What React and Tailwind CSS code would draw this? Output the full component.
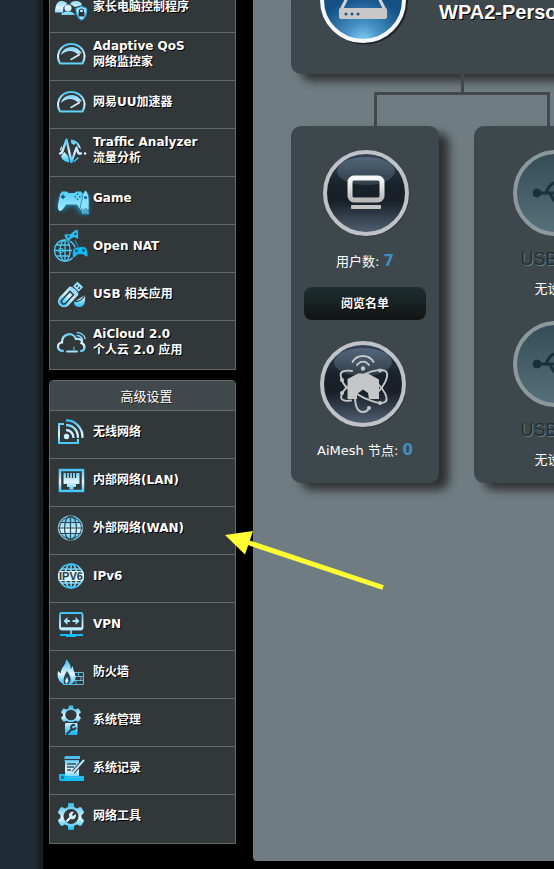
import React from "react";

const G = "url(#ice)";

function Gauge() {
  return (
    <g fill="none" stroke={G} strokeLinecap="round">
      <path strokeWidth="2" strokeLinejoin="round" d="M10 30.500 C6.500 25 8 19 11 15.500 C15 11 18 11 21 11 C26 11 29 12.500 32 16 C35 20 35.500 25 32.500 30.500 Z" />
      <path stroke="none" fill={G} d="M11 22 C13 14.500 21 12 28 16 L32 20 L27.500 21 C23 17 16 17 11 22 Z" />
      <path strokeWidth="1.600" d="M21 26.500 L29.500 21.500" />
    </g>
  );
}

function Parental() {
  return (
    <g fill={G}>
      <circle cx="11" cy="11" r="4" />
      <circle cx="26" cy="11" r="4" />
      <path d="M5 27.500 C5 21 7 16 11 16 C15 16 17 18 17 19 L13.500 22 L13 27.500 Z" />
      <path d="M20 19 C21 17 23 16 26 16 C29 16 31 17 32 20 L25 22 Z" />
      <circle cx="18" cy="23" r="3.600" />
      <path d="M11 30 C12 27 15 26.500 18 26.500 C22 26.500 24 28 25 30 Z" />
      <path fill="#b4e6fb" stroke="#2bb5ed" strokeWidth="1.200" d="M26 23.500 L31.500 21.500 L36.500 23.500 C37 29 35 33 31.500 35 C28 33 26 29 26 23.500 Z" />
      <rect x="28.500" y="27" width="6" height="4.500" fill="#24343c" />
      <path d="M29.500 27 V25.500 C29.500 23.500 33.500 23.500 33.500 25.500 V27" fill="none" stroke="#24343c" strokeWidth="1.200" />
    </g>
  );
}

function Traffic() {
  return (
    <g fill="none" stroke={G} strokeLinejoin="round" strokeLinecap="round">
      <path stroke="none" fill={G} d="M21 10.500 C26 11 30 14 31 20 L28.500 18.500 L26 14 L24 16 L21 14 Z" />
      <path stroke="none" fill={G} d="M11 27 L14.500 23 L18 27 L19.500 33.500 C15 33 12 31 11 27 Z" />
      <path strokeWidth="1.200" d="M11.500 18 L10.500 21 M24 32.500 L28 29" />
      <path strokeWidth="2.300" d="M10 24.500 L12 23.500 L16.500 10.500 L21.500 33 L26.500 18.500 L28.500 24.500 L31 24.500" />
      <circle cx="35" cy="24.500" r="1.200" fill="#e8f9ff" stroke="none" />
    </g>
  );
}

function Game() {
  return (
    <g>
      <path filter="url(#glow)" fill="#0fb1ee" opacity=".65" d="M9 20 L8 33 L13 34 L17 29 H26 L30 37 H38 V18 Z" />
      <path fill="url(#sky)" d="M12 14.500 H17 L18.500 16 H24.500 L26 14.500 H31 L33 17 L35 25 C36 30 36 33 33 34 C31 34 28 29 27 27.500 H16 C14.500 30 12 34 10 34 C7.500 33 7.500 29 8.500 25 L10 17 Z" />
      <path fill="#8fe0fb" stroke="#1c7fa7" strokeWidth=".8" d="M32 23 C32 19 33.500 15 35.500 13.500 C37.500 15 39 19 39 23 V37 H32 V32 L30 30 Z" />
      <circle cx="35.500" cy="20.500" r="1.600" fill="#166b91" />
      <path d="M34 37 V32 M36 37 V31 M38 36 V32" stroke="#166b91" strokeWidth="1" />
      <path d="M13 17.500 V22 M10.800 19.700 H15.200" stroke="#114e6b" strokeWidth="1.400" />
      <path d="M27.500 16.500 V18 M27.500 21.500 V23 M24.500 19.700 H26 M29 19.700 H30.500" stroke="#146a90" strokeWidth="1.500" />
    </g>
  );
}

function OpenNat() {
  return (
    <g fill="none" stroke="#4bcaf4" strokeWidth="1.300">
      <circle cx="15" cy="25.500" r="10.500" />
      <ellipse cx="15" cy="25.500" rx="5" ry="10.500" />
      <path d="M15 15 V36 M4.500 25.500 H22 M6.500 20 H20 M6.500 31 H20" />
      <circle cx="11" cy="25.500" r="2.300" strokeWidth="1" />
      <path fill="#2fbdf0" stroke="#323739" strokeWidth=".8" d="M14 10 C16 8 18 9 20 9 L25 5 C28 3 28.500 6 28.500 9 C29 13 28 15 26.500 13.500 L24 12.500 L21 14 L19 17 C17 17 15 13 14 10 Z" />
      <circle cx="18.500" cy="11.500" r="1.300" fill="#165774" stroke="none" />
      <circle cx="25.500" cy="9" r="1.300" fill="#165774" stroke="none" />
      <path d="M25 15.500 L28 21.500" stroke="#198fbd" />
      <path fill="#12b9f3" stroke="#323739" strokeWidth=".8" d="M23 24 L27 22 L33 21.500 C37 22 38 26 38 31 C37 33 35 31 33 29.500 H28 L24 33 C22 34 22 28 23 24 Z" />
      <circle cx="26.500" cy="26" r="1.400" fill="#165774" stroke="none" />
      <circle cx="33.500" cy="25.500" r="1.400" fill="#165774" stroke="none" />
    </g>
  );
}

function Usb() {
  return (
    <g>
      <g transform="rotate(43 19 23)">
        <path fill={G} stroke="#c3ecfc" strokeWidth="1" d="M13.500 16 C13.500 14 24.500 14 24.500 16 V30 C24.500 37.500 13.500 37.500 13.500 30 Z" />
        <path fill="none" stroke="#29404b" strokeWidth="1.500" d="M16.500 19 H21.500 V30 C21.500 34 16.500 34 16.500 30 Z" />
        <path fill="#b9eafd" stroke="#4abce8" strokeWidth=".8" d="M15.500 7 H23 V13 H15.500 Z" />
        <path stroke="#20475a" strokeWidth="1.600" d="M18 9 V11.500 M21 9 V11.500" />
      </g>
      <path fill={G} d="M24 29 L35 22 C35.500 27 35 34 29.500 34 C26 34 24 32 24 29 Z" />
      <path fill="none" stroke="#31424a" strokeWidth="1.300" d="M25 28.500 C29 29 33 26 35 22" />
    </g>
  );
}

function Cloud() {
  return (
    <g fill="none" stroke={G} strokeWidth="2.200" strokeLinecap="round">
      <path d="M13 30 C6.500 30 6.500 22 12 21.500 C12 12.500 23 10 26 18 C31 17 33 20 31.500 22 C36 24 35 30 31 30" />
      <path strokeWidth="2" d="M17 30.500 H27" stroke="#9fe2fb" />
      <path strokeWidth="1" d="M24 26 V29" stroke="#5bcdf5" />
      <path strokeWidth="1.300" d="M27 11.500 C31 11.500 34.500 14 35 17.500 M27 14.500 C30 14.500 31.500 16 32.500 18.500" />
    </g>
  );
}

function Wireless() {
  return (
    <g fill="none" stroke={G} strokeWidth="2">
      <path d="M14 13 H9 V32 H28 V28" />
      <path strokeWidth="2.300" d="M16 9.500 C25 9 33 17 32.500 27 M16 14 C23 14 28 19 28 27 M16 19 C20 19 23.500 22 23.500 27" />
      <circle cx="16.500" cy="25.500" r="2.700" fill="#c9effd" stroke="none" />
    </g>
  );
}

function Lan() {
  return (
    <g>
      <rect x="10" y="11" width="23" height="21" fill="none" stroke={G} strokeWidth="2.500" />
      <path fill={G} d="M13.500 14 H29.500 V25 H26 V28 H23.500 V30.500 H19.500 V28 H17 V25 H13.500 Z" />
      <path stroke="#323739" strokeWidth="1.300" d="M16.500 14 V19 M19.500 14 V19 M22.500 14 V19 M25.500 14 V19" />
    </g>
  );
}

function Wan() {
  return (
    <g>
      <circle cx="20.500" cy="21" r="12" fill={G} />
      <circle cx="20.500" cy="21" r="12.300" fill="none" stroke="#a3dff5" strokeWidth=".8" />
      <g fill="none" stroke="#2f4855" strokeWidth="1.200">
        <circle cx="20.500" cy="21" r="11" strokeWidth="1" />
        <ellipse cx="20.500" cy="21" rx="6" ry="12" />
        <path d="M20.500 9 V33 M8 21 H33 M10 15.500 H31 M10 26.500 H31" />
      </g>
    </g>
  );
}

function Ipv6() {
  return (
    <g fill="none" stroke={G} strokeWidth="1.700">
      <circle cx="21" cy="21" r="12" />
      <ellipse cx="21" cy="21" rx="6" ry="12" />
      <path d="M21 9 V33 M11 14 H31 M11 28 H31" />
      <path d="M9 16 H33 Q35 21 33 26 H9 Q7 21 9 16 Z" fill="#d9f5ff" stroke="none" />
      <text x="21" y="25" textAnchor="middle" fontFamily="Liberation Sans" fontWeight="700" fontSize="11" fill="#29383f" stroke="none">IPV6</text>
    </g>
  );
}

function Vpn() {
  return (
    <g fill="none" stroke={G} strokeWidth="1.800">
      <rect x="10" y="10" width="22.500" height="16.500" rx="1.500" />
      <path strokeWidth="2.500" d="M11 25.500 H32" stroke="#c6effd" />
      <path fill="#9fe4fb" stroke="none" d="M13.500 18 L17.500 14 V17 H20 V19 H17.500 V22 Z M29.500 18 L25.500 14 V17 H22.500 V19 H25.500 V22 Z" />
      <path d="M21 27 V31" stroke="#6bd2f6" />
      <path stroke="#11bdf5" strokeWidth="2" d="M10 32 H33" />
      <path stroke="#11bdf5" strokeWidth="3" d="M16 32.500 H26" />
    </g>
  );
}

function Firewall() {
  return (
    <g>
      <g fill="none" stroke="#59bce0" strokeWidth="1">
        <path d="M24 21.500 H33.500 V33.500 H13 M24 25.500 H33 M22 29.500 H33 M28.500 21.500 V25.500 M31 25.500 V29.500 M26 29.500 V33.500" />
      </g>
      <path fill={G} d="M16 8 C20 12 21 15 20.500 18 L23 15 C23 20 26 23 25.500 27 C25 31 22 33 20 33 H13 C8 30 7 25 8 20 L11 22.500 C10 17 16 15 16 8 Z" />
      <path fill="#2c4552" d="M17 20 C20 24 21 27 20.500 30 L18.500 33 H14.500 C12.500 29 14 25 17 20 Z" />
      <path fill="#d2f2fd" d="M17 26 L18.500 30 L16.500 33 L15 30 Z" />
    </g>
  );
}

function GearShape() {
  return (
    <path fillRule="evenodd" fill={G} d="M18 12 V9 Q18 8 19 8 H23 Q24 8 24 9 V12 L27 13.500 L30 12 L31.500 12.500 L34 17 L33.500 18.500 L31.500 20 V23 L33.500 24.500 L34 26 L31.500 30.500 L30 31 L27 29.500 L24 31 V34 Q24 35 23 35 H19 Q18 35 18 34 V31 L15 29.500 L12 31 L10.500 30.500 L8 26 L8.500 24.500 L10.500 23 V20 L8.500 18.500 L8 17 L10.500 12.500 L12 12 L15 13.500 Z M21 14 A7.500 7.500 0 1 0 21 29 A7.500 7.500 0 1 0 21 14 Z" />
  );
}

function Admin() {
  return (
    <g>
      <g transform="translate(5 1) scale(.76 .7)">
        <GearShape />
      </g>
      <rect x="15" y="24" width="12.500" height="12" rx="1" fill={G} />
      <path stroke="#323739" strokeWidth="1" d="M14 23.500 H29" />
      <path fill="none" stroke="#29414d" strokeWidth="2.200" d="M16.500 35.500 L22 30 M25 26 C20 25 20 31 24 30.500 L26 28.500" />
    </g>
  );
}

function Log() {
  return (
    <g>
      <path fill={G} d="M15 9 H30 V12 H29 V30 H15 V15 L14 12 Z" />
      <path stroke="#323739" strokeWidth="1.200" d="M14 12.500 H30" />
      <path stroke="#32515f" strokeWidth="1.300" d="M17 17 H26 M17 20 H24 M17 23 H21" />
      <path stroke="#323739" strokeWidth="4" d="M23 25.500 L34 13" />
      <path stroke="#bdeafb" strokeWidth="2" d="M22 26.500 L34 13" />
      <path fill="#12bff5" d="M9 27 H15 V29 H34 V34 H11 C9 34 9 32 9 30 Z" />
      <circle cx="12.500" cy="30.500" r="1.700" fill="#2b6983" />
      <path stroke="#5cb5d5" strokeWidth="1" d="M17 30.500 H33" />
    </g>
  );
}

function Tools() {
  return (
    <g>
      <GearShape />
      <path fill="none" stroke="#d8f4fe" strokeWidth="2.400" strokeLinecap="round" d="M17 26 L21 22" />
      <path fill="#cdf0fd" d="M19 21 C18.500 18 21 16 24 17 L22 19.500 L23 21 L26 19 C26.500 23 24 25 21 24 Z" />
    </g>
  );
}

const general = [
  { icon: Gauge, lines: ["Adaptive QoS", "网络监控家"] },
  { icon: Gauge, lines: ["网易UU加速器"] },
  { icon: Traffic, lines: ["Traffic Analyzer", "流量分析"] },
  { icon: Game, lines: ["Game"] },
  { icon: OpenNat, lines: ["Open NAT"] },
  { icon: Usb, lines: ["USB 相关应用"] },
  { icon: Cloud, lines: ["AiCloud 2.0", "个人云 2.0 应用"] },
];

const advanced = [
  { icon: Wireless, lines: ["无线网络"] },
  { icon: Lan, lines: ["内部网络(LAN)"] },
  { icon: Wan, lines: ["外部网络(WAN)"] },
  { icon: Ipv6, lines: ["IPv6"] },
  { icon: Vpn, lines: ["VPN"] },
  { icon: Firewall, lines: ["防火墙"] },
  { icon: Admin, lines: ["系统管理"] },
  { icon: Log, lines: ["系统记录"] },
  { icon: Tools, lines: ["网络工具"] },
];

function MenuIcon({ icon: Icon }) {
  return (
    <svg className="h-[47px] w-[43px] shrink-0" viewBox="0 0 43 47" aria-hidden="true">
      <Icon />
    </svg>
  );
}

function MenuItem({ icon, lines }) {
  return (
    <li className="border-t border-[#63696b] bg-[#323739] last:pb-px">
      <a href="#" className="flex h-[47px] items-center">
        <MenuIcon icon={icon} />
        <span className="pb-[5px] text-xs leading-4 font-bold text-white [text-shadow:1px_1px_0_#000]">
          {lines.map((line) => (
            <span key={line} className="block whitespace-nowrap">{line}</span>
          ))}
        </span>
      </a>
    </li>
  );
}

function Orb({ id, children, muted }) {
  return (
    <svg className="h-[88px] w-[88px]" viewBox="0 0 88 88" aria-hidden="true">
      <circle cx="45.500" cy="45.500" r="42" fill="#232b30" opacity={muted ? 0 : 0.8} />
      <circle cx="44" cy="44" r="41" fill={`url(#${id})`} stroke={muted ? "#8c989c" : "#bfc2c6"} strokeWidth="4" />
      {!muted && <ellipse cx="44" cy="22" rx="29" ry="14" fill="url(#gloss)" />}
      {children}
    </svg>
  );
}

function UsbPort({ name }) {
  return (
    <div className="flex flex-col items-center">
      <div className="pl-1">
        <Orb id="teal" muted>
          <g fill="#17323d" stroke="#17323d">
            <circle cx="25" cy="44" r="4" />
            <path fill="none" strokeWidth="3" d="M26 44 H64 M34 44 C38 34 42 33 49 33 M38 44 C42 54 45 55 53 55" />
            <circle cx="50" cy="33" r="3" />
            <path d="M52 52 H58 V58 H52 Z M63 39 L71 44 L63 49 Z" />
          </g>
        </Orb>
      </div>
      <h3 className="mt-3 font-['Liberation_Sans'] text-lg leading-5 text-[#232d30] [text-shadow:1px_1px_0_#5e7b82]">{name}</h3>
      <p className="mt-2 text-[13px] leading-6 text-white">无设备</p>
    </div>
  );
}

const card = "rounded-[10px] bg-[#3e484c] shadow-[10px_7px_10px_#303031]";

export default function App() {
  return (
    <div className="relative flex min-h-screen overflow-hidden bg-black font-['DejaVu_Sans','Noto_Sans_CJK_SC',sans-serif]">
      <svg className="absolute h-0 w-0" aria-hidden="true">
        <defs>
          <linearGradient id="ice" gradientUnits="userSpaceOnUse" x1="0" y1="8" x2="0" y2="35">
            <stop offset="0" stopColor="#2cb9f0" />
            <stop offset=".55" stopColor="#e2f6ff" />
            <stop offset="1" stopColor="#14bbf5" />
          </linearGradient>
          <linearGradient id="sky" x1="0" y1="0" x2="0" y2="1">
            <stop offset="0" stopColor="#4fcdf6" />
            <stop offset="1" stopColor="#a8ecff" />
          </linearGradient>
          <filter id="glow" x="-50%" y="-50%" width="200%" height="200%">
            <feGaussianBlur stdDeviation="2.500" />
          </filter>
          <linearGradient id="night" x1="0" y1="0" x2="0" y2="1">
            <stop offset="0" stopColor="#35435a" />
            <stop offset=".4" stopColor="#18222a" />
            <stop offset=".6" stopColor="#182028" />
            <stop offset="1" stopColor="#536275" />
          </linearGradient>
          <linearGradient id="gloss" x1="0" y1="0" x2="0" y2="1">
            <stop offset="0" stopColor="#566a7e" stopOpacity=".9" />
            <stop offset="1" stopColor="#41505c" stopOpacity=".6" />
          </linearGradient>
          <linearGradient id="teal" x1="0" y1="0" x2="0" y2="1">
            <stop offset="0" stopColor="#344c55" />
            <stop offset="1" stopColor="#56717a" />
          </linearGradient>
          <radialGradient id="blue" cx=".5" cy="1" r=".55">
            <stop offset="0" stopColor="#80d0f3" />
            <stop offset=".4" stopColor="#438fc3" />
            <stop offset="1" stopColor="#155084" />
          </radialGradient>
          <linearGradient id="silver" x1="0" y1="0" x2="0" y2="1">
            <stop offset="0" stopColor="#fafafa" />
            <stop offset="1" stopColor="#b9b9bb" />
          </linearGradient>
        </defs>
      </svg>

      <div className="w-[43px] shrink-0 border-r border-[#202325] bg-linear-to-r from-[#1e2d35] from-80% to-[#121b20]" />

      <nav className="ml-[6px] w-[187px] shrink-0">
        <ul className="border-x border-b border-[#63696b]">
          <li className="bg-[#323739]">
            <a href="#" className="flex h-8 items-end overflow-hidden">
              <MenuIcon icon={Parental} />
              <span className="pb-[17px] text-xs leading-4 font-bold text-white [text-shadow:1px_1px_0_#000]">家长电脑控制程序</span>
            </a>
          </li>
          {general.map((item) => (
            <MenuItem key={item.lines[0]} {...item} />
          ))}
        </ul>

        <section className="mt-[10px] overflow-hidden rounded-t border border-[#63696b]">
          <h2 className="bg-[#42494c] pt-[6px] pb-[3px] pl-2 text-center text-[13px] leading-5 text-white [text-shadow:1px_1px_0_#222]">高级设置</h2>
          <ul>
            {advanced.map((item) => (
              <MenuItem key={item.lines[0]} {...item} />
            ))}
          </ul>
        </section>
      </nav>

      <main className="mb-2 ml-[17px] min-w-0 flex-1 overflow-hidden rounded-bl bg-[#6f7d82] pl-[38px]">
        <div className="w-[343px]">
          <section className={`${card} flex h-[74px] items-start rounded-t-none`}>
            <svg className="ml-7 h-12 w-[89px] shrink-0" viewBox="0 0 89 48" aria-hidden="true">
              <circle cx="46" cy="1.500" r="43" fill="#1d262b" />
              <circle cx="44" cy="0" r="41" fill="url(#blue)" stroke="#f6f8f8" strokeWidth="4" />
              <path fill="none" stroke="#d1d3d5" strokeWidth="3" d="M29 -4 L22 10 H66 L59 -4" />
              <rect x="20" y="8" width="48" height="11" rx="2" fill="#c8c8c9" />
              <path stroke="#1f5888" strokeWidth="3" strokeLinecap="round" d="M27 14 h.01 M33 14 h.01 M39 14 h.01" />
            </svg>
            <p className="ml-[31px] font-['Liberation_Sans'] text-xl leading-6 font-bold whitespace-nowrap text-white [text-shadow:1px_1px_0_#000]">WPA2-Personal</p>
          </section>

          <div className="mx-auto h-[18px] w-[3px] bg-[#44484a]" />
          <div className="ml-[83px] h-[34px] w-[176px] border-x-[3px] border-t-[3px] border-[#44484a]" />

          <div className="flex justify-between">
            <section className={`${card} flex h-[357px] w-[148px] flex-col items-center`}>
              <div className="mt-[23px] pl-[2px]">
                <Orb id="night">
                  <rect x="28" y="29" width="32" height="22" rx="4" fill="none" stroke="url(#silver)" strokeWidth="5" />
                  <rect x="29" y="56" width="30" height="4" rx="1" fill="#c4c4c6" />
                </Orb>
              </div>
              <p className="mt-3 text-[13px] leading-6 text-white">
                用户数: <b className="text-[15px] text-[#3f8fc5]">7</b>
              </p>
              <button type="button" className="mt-[13px] h-[33px] w-[122px] rounded-lg bg-linear-to-b from-[#1f2e30] to-[#121414] text-xs font-bold text-white [text-shadow:1px_1px_0_#000]">
                阅览名单
              </button>
              <div className="mt-5 pr-1">
                <Orb id="night">
                  <g fill="none" stroke="#c5c6c8" strokeWidth="1.900" strokeLinecap="round">
                    <path d="M33.500 22 C38 14 50 14 54.500 22 M38 25 C41 20.500 47 20.500 50 25" />
                    <path d="M33 31 C26 30 20 31 22 37 C23 41 26 46 28 48" />
                    <path d="M46 34 C54 30 66 28 68 33 C69 38 65 46 59 52" />
                    <path d="M28 47 C23 52 20 58 24 60 C26 61 29 61 32 60.500" />
                    <path d="M38 54 C47 60 62 65 66 62 C70 59 66 52 60 45" />
                    <path d="M36 56 C36 66 39 72 44 72 C47 72 49 70 50 68" />
                  </g>
                  <g fill="#c5c6c8">
                    <circle cx="44" cy="28.500" r="2.200" />
                    <circle cx="61" cy="30.500" r="2" />
                    <circle cx="23" cy="40" r="2" />
                    <circle cx="23" cy="53" r="2" />
                    <circle cx="61" cy="63" r="2" />
                    <circle cx="50" cy="68" r="2" />
                    <path d="M28.500 42 V39 L39 33.500 H49 L60 39.500 V59 H50 L49 53 L44 49.500 L38 54 V59 H28.500 Z" />
                  </g>
                </Orb>
              </div>
              <p className="mt-[10px] text-[13px] leading-6 whitespace-nowrap text-white">
                AiMesh 节点: <b className="text-[15px] text-[#3f8fc5]">0</b>
              </p>
            </section>

            <section className={`${card} flex h-[357px] w-[160px] flex-col gap-[19px] pt-[23px]`}>
              <UsbPort name="USB 3.0" />
              <UsbPort name="USB 2.0" />
            </section>
          </div>
        </div>
      </main>

      <svg className="pointer-events-none absolute top-[530px] left-[224px] h-[64px] w-[164px]" viewBox="224 530 164 64" aria-hidden="true">
        <path d="M245 541.500 L383 587.500" stroke="#ffff33" strokeWidth="5" />
        <path d="M225 535 L253 531 L245 554.500 Z" fill="#ffff33" />
      </svg>
    </div>
  );
}
